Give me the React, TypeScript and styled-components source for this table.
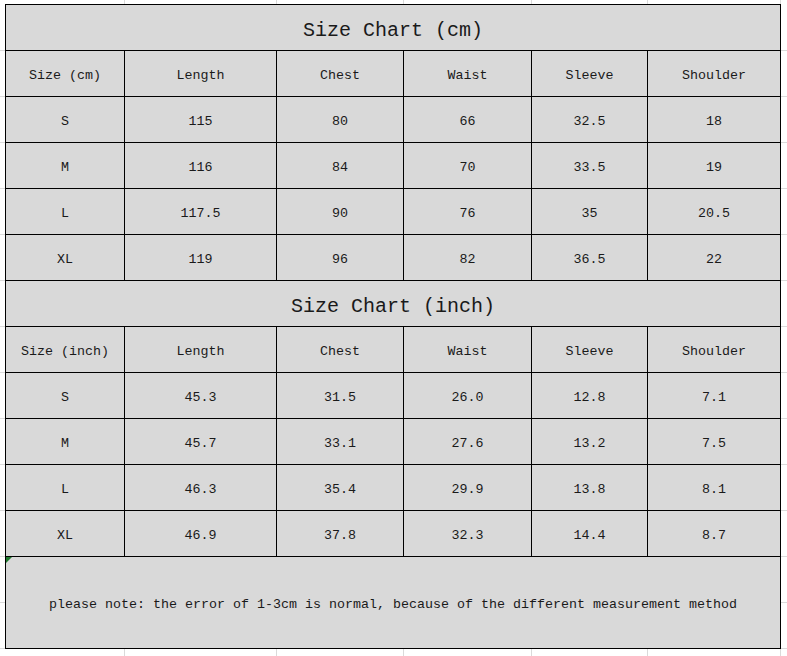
import React from "react";
import styled, { createGlobalStyle } from "styled-components";

const GlobalStyle = createGlobalStyle`
    html, body {
        margin: 0;
        padding: 0;
        background: #ffffff;
    }
`;

const gridX = [124, 276, 403, 531, 647, 780];

// faint spreadsheet gridlines round the table
const Sheet = styled.div`
    min-height: 656px;
    box-sizing: border-box;
    padding: 4px 0 0 5px;
    font-family: "Liberation Mono", "DejaVu Sans Mono", monospace;
    color: #1a1a1a;
    background-image:
        ${gridX.map((x) => `linear-gradient(to right, transparent ${x}px, #dadada ${x}px, #dadada ${x + 1}px, transparent ${x + 1}px)`).join(", ")},
        repeating-linear-gradient(to bottom, transparent 0, transparent 45px, #dadada 45px, #dadada 46px);
    background-position: 0 0, 0 0, 0 0, 0 0, 0 0, 0 0, 0 5px;
`;

const Table = styled.table`
    border-collapse: collapse;
    table-layout: fixed;
    width: 775px;
    background: #d9d9d9;
`;

const Cell = styled.td<{ $title?: boolean; $note?: boolean }>`
    border: 1px solid #000;
    padding: 0;
    padding-top: ${(p) => (p.$title ? "7px" : p.$note ? "5px" : "4px")};
    height: ${(p) => (p.$note ? "86px" : p.$title ? "38px" : "41px")};
    text-align: center;
    vertical-align: middle;
    font-size: ${(p) => (p.$title ? "20px" : "13.33px")};
    line-height: 1;
    white-space: nowrap;
    position: relative;
`;

const Marker = styled.span`
    position: absolute;
    left: 0;
    top: 0;
    width: 0;
    height: 0;
    border-top: 6px solid #1f7a2e;
    border-right: 6px solid transparent;
`;

const widths = [119, 152, 127, 128, 116, 133];

type Section = {
    title: string;
    label: string;
    rows: string[][];
};

const sections: Section[] = [
    {
        title: "Size Chart (cm)",
        label: "Size (cm)",
        rows: [
            ["S", "115", "80", "66", "32.5", "18"],
            ["M", "116", "84", "70", "33.5", "19"],
            ["L", "117.5", "90", "76", "35", "20.5"],
            ["XL", "119", "96", "82", "36.5", "22"],
        ],
    },
    {
        title: "Size Chart (inch)",
        label: "Size (inch)",
        rows: [
            ["S", "45.3", "31.5", "26.0", "12.8", "7.1"],
            ["M", "45.7", "33.1", "27.6", "13.2", "7.5"],
            ["L", "46.3", "35.4", "29.9", "13.8", "8.1"],
            ["XL", "46.9", "37.8", "32.3", "14.4", "8.7"],
        ],
    },
];

const headers = ["Length", "Chest", "Waist", "Sleeve", "Shoulder"];

const App: React.FC = () => {
    return (
        <>
            <GlobalStyle />
            <Sheet>
                <Table>
                    <colgroup>
                        {widths.map((w, i) => (
                            <col key={i} style={{ width: w }} />
                        ))}
                    </colgroup>
                    <tbody>
                        {sections.map((s) => (
                            <React.Fragment key={s.title}>
                                <tr>
                                    <Cell $title colSpan={6}>{s.title}</Cell>
                                </tr>
                                <tr>
                                    <Cell>{s.label}</Cell>
                                    {headers.map((h) => (
                                        <Cell key={h}>{h}</Cell>
                                    ))}
                                </tr>
                                {s.rows.map((r) => (
                                    <tr key={r[0]}>
                                        {r.map((v, i) => (
                                            <Cell key={i}>{v}</Cell>
                                        ))}
                                    </tr>
                                ))}
                            </React.Fragment>
                        ))}
                        <tr>
                            <Cell $note colSpan={6}>
                                <Marker />
                                please note: the error of 1-3cm is normal, because of the different measurement method
                            </Cell>
                        </tr>
                    </tbody>
                </Table>
            </Sheet>
        </>
    );
};

export default App;
